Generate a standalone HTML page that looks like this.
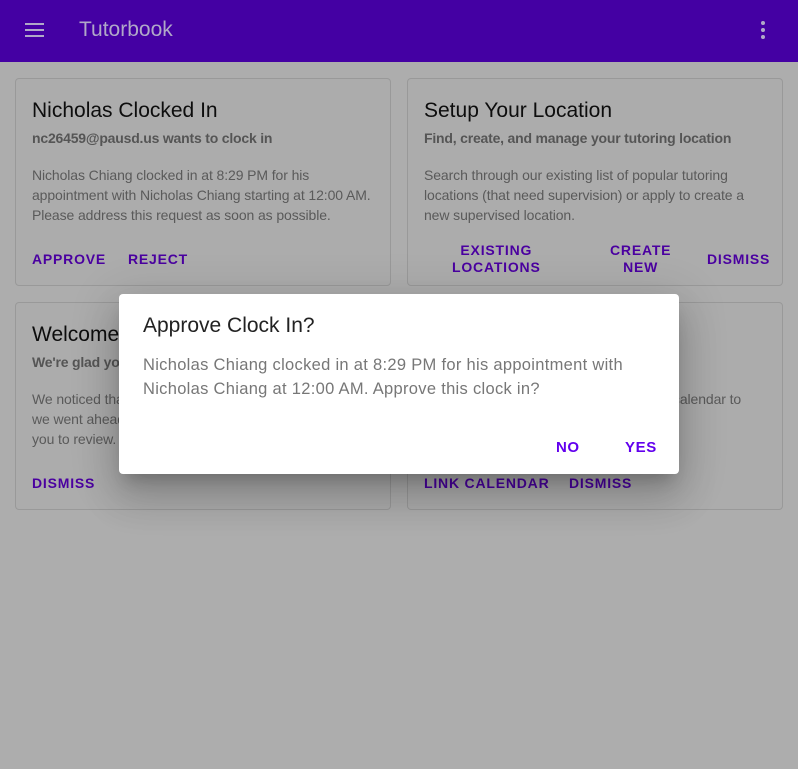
<!DOCTYPE html>
<html><head><meta charset="utf-8"><style>
*{margin:0;padding:0;box-sizing:border-box}
body{width:798px;height:769px;overflow:hidden;background:#adadad;font-family:"Liberation Sans",Roboto,sans-serif;position:relative}
.hdr{position:absolute;left:0;top:0;width:798px;height:62px;background:#4400a3}
.hdr .t{position:absolute;left:79px;top:18px;font-size:21px;color:#b0a8c8}
.card{position:absolute;border:1px solid #999;border-radius:4px;background:#acacac;overflow:hidden}
.card h2{position:absolute;left:16px;top:20px;font-size:21px;font-weight:normal;color:#0d0d0d;white-space:nowrap}
.card .s{position:absolute;left:16px;top:51px;font-size:14px;font-weight:bold;color:#555;white-space:nowrap;letter-spacing:-.2px}
.card p{position:absolute;left:16px;top:86px;width:342px;font-size:14px;line-height:20px;color:#5a5a5a;letter-spacing:-.1px}
.btn{position:absolute;font-size:14px;font-weight:bold;letter-spacing:.8px;color:#4a00a0;text-align:center;line-height:17px;white-space:nowrap}
.dlg{position:absolute;left:119px;top:294px;width:560px;height:180px;background:#fff;border-radius:4px;box-shadow:0 11px 15px -7px rgba(0,0,0,.2),0 24px 38px 3px rgba(0,0,0,.14),0 9px 46px 8px rgba(0,0,0,.12)}
.dlg h3{position:absolute;left:24px;top:20px;font-size:21px;font-weight:normal;color:#222}
.dlg p{position:absolute;left:24px;top:59px;width:510px;font-size:16.5px;line-height:24px;color:#777;letter-spacing:.3px}
.dlg .b{position:absolute;top:145px;font-size:15px;font-weight:bold;letter-spacing:.6px;color:#6200ee}
</style></head><body>
<div class="hdr">
<svg style="position:absolute;left:25px;top:21px" width="20" height="18"><rect x="0" y="2" width="19" height="2" fill="#b0a8c8"/><rect x="0" y="8" width="19" height="2" fill="#b0a8c8"/><rect x="0" y="14" width="19" height="2" fill="#b0a8c8"/></svg>
<div class="t">Tutorbook</div>
<svg style="position:absolute;left:759px;top:20px" width="8" height="20"><circle cx="4" cy="3" r="2" fill="#b0a8c8"/><circle cx="4" cy="10" r="2" fill="#b0a8c8"/><circle cx="4" cy="17" r="2" fill="#b0a8c8"/></svg>
</div>

<div class="card" style="left:15px;top:78px;width:376px;height:208px">
<h2>Nicholas Clocked In</h2>
<div class="s">nc26459@pausd.us wants to clock in</div>
<p>Nicholas Chiang clocked in at 8:29 PM for his appointment with Nicholas Chiang starting at 12:00 AM. Please address this request as soon as possible.</p>
<div class="btn" style="left:16px;top:172px">APPROVE</div>
<div class="btn" style="left:112px;top:172px">REJECT</div>
</div>

<div class="card" style="left:407px;top:78px;width:376px;height:208px">
<h2>Setup Your Location</h2>
<div class="s">Find, create, and manage your tutoring location</div>
<p>Search through our existing list of popular tutoring locations (that need supervision) or apply to create a new supervised location.</p>
<div class="btn" style="left:44px;top:163px">EXISTING<br>LOCATIONS</div>
<div class="btn" style="left:202px;top:163px">CREATE<br>NEW</div>
<div class="btn" style="left:299px;top:172px">DISMISS</div>
</div>

<div class="card" style="left:15px;top:302px;width:376px;height:208px">
<h2>Welcome, Nicholas</h2>
<div class="s">We're glad you're here</div>
<p>We noticed that you haven't set up your profile yet, so we went ahead and made some profile suggestions for you to review.</p>
<div class="btn" style="left:16px;top:172px">DISMISS</div>
</div>

<div class="card" style="left:407px;top:302px;width:376px;height:208px">
<h2>Link Google Calendar</h2>
<div class="s">Sync appointments in one place</div>
<p>Link your Google Calendar to our in-app calendar to sync your appointments</p>
<div class="btn" style="left:16px;top:172px">LINK CALENDAR</div>
<div class="btn" style="left:161px;top:172px">DISMISS</div>
</div>

<div class="dlg">
<h3>Approve Clock In?</h3>
<p>Nicholas Chiang clocked in at 8:29 PM for his appointment with Nicholas Chiang at 12:00 AM. Approve this clock in?</p>
<div class="b" style="left:437px">NO</div>
<div class="b" style="left:506px">YES</div>
</div>
</body></html>
